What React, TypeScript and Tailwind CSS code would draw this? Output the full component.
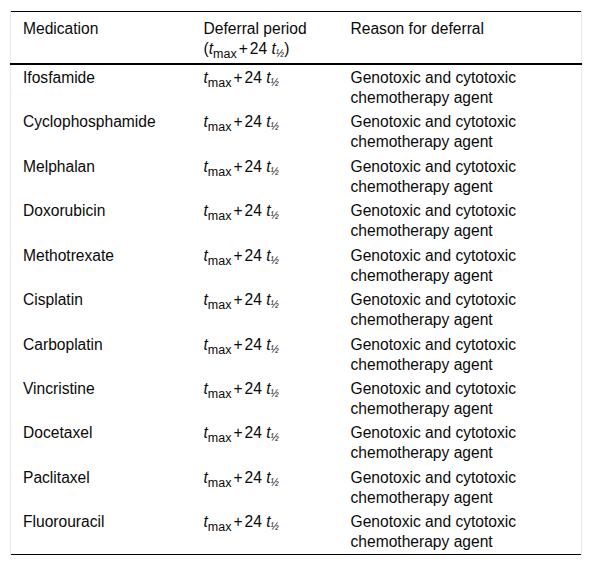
import React from "react";

const meds = [
  "Ifosfamide",
  "Cyclophosphamide",
  "Melphalan",
  "Doxorubicin",
  "Methotrexate",
  "Cisplatin",
  "Carboplatin",
  "Vincristine",
  "Docetaxel",
  "Paclitaxel",
  "Fluorouracil",
];

function Formula() {
  return (
    <span className="whitespace-nowrap">
      <i>t</i>
      <span className="text-[12.5px] leading-[0] relative top-[4px]">max</span>
      <span className="mx-[2px]">+</span>24 <i>t</i>
      <i className="text-[10px] leading-[0] relative top-[3px]">½</i>
    </span>
  );
}

const cell = "align-top px-3 leading-[20px]";

export default function App() {
  return (
    <div className="bg-white w-[592px] h-[567px] pt-[11px] pl-[10px] text-[15.6px] text-[#0a0a0a] font-['Liberation_Sans',Arial,sans-serif]">
      <table className="w-[571px] border-collapse table-fixed">
        <colgroup>
          <col className="w-[181px]" />
          <col className="w-[147px]" />
          <col className="w-[243px]" />
        </colgroup>
        <thead>
          <tr className="border-t border-t-black border-b-2 border-b-black">
            <th className={`${cell} text-left font-normal pt-[6.6px] pb-[4.4px] border-l border-l-[#e8e8e8]`}>
              Medication
            </th>
            <th className={`${cell} text-left font-normal pt-[6.6px] pb-[4.4px]`}>
              Deferral period
              <br />(<Formula />)
            </th>
            <th className={`${cell} text-left font-normal pt-[6.6px] pb-[4.4px] border-r border-r-[#e8e8e8]`}>
              Reason for deferral
            </th>
          </tr>
        </thead>
        <tbody>
          {meds.map((m, i) => (
            <tr
              key={m}
              className={i === meds.length - 1 ? "border-b border-b-black" : ""}
            >
              <td className={`${cell} pt-[3px] pb-[1.45px] border-l border-l-[#e8e8e8]`}>
                {m}
              </td>
              <td className={`${cell} pt-[3px] pb-[1.45px]`}>
                <Formula />
              </td>
              <td className={`${cell} pt-[3px] pb-[1.45px] border-r border-r-[#e8e8e8]`}>
                Genotoxic and cytotoxic
                <br />
                chemotherapy agent
              </td>
            </tr>
          ))}
        </tbody>
      </table>
    </div>
  );
}
